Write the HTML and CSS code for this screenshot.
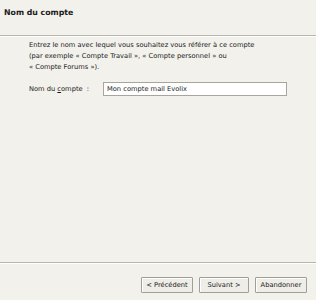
FILE: index.html
```html
<!DOCTYPE html>
<html>
<head>
<meta charset="utf-8">
<link rel="stylesheet" href="styles.css">
</head>
<body>
<div class="wizard">
  <div class="header">
    <div class="title">Nom du compte</div>
  </div>
  <div class="content">
    <p class="desc">Entrez le nom avec lequel vous souhaitez vous référer à ce compte<br>(par exemple « Compte Travail », « Compte personnel » ou<br>« Compte Forums »).</p>
    <div class="field">
      <span class="label">Nom du <u>c</u>ompte&nbsp; :</span>
      <div class="input">Mon compte mail Evolix</div>
    </div>
  </div>
  <div class="footer">
    <button class="btn">&lt; Précédent</button>
    <button class="btn btn-next">Suivant &gt;</button>
    <button class="btn">Abandonner</button>
  </div>
</div>
</body>
</html>
```
FILE: styles.css
```css
html, body {
  margin: 0;
  padding: 0;
  width: 316px;
  height: 300px;
  overflow: hidden;
  background: #f2f1ec;
}
.wizard {
  display: flex;
  flex-direction: column;
  height: 300px;
  font-family: "DejaVu Sans", sans-serif;
  font-size: 6.7px;
  color: #1a1a1a;
}
.header {
  height: 36px;
  flex: none;
  border-bottom: 1px solid #b9b6ae;
  box-shadow: 0 1px 0 #ffffff;
  box-sizing: border-box;
  padding: 8px 0 0 4px;
}
.title {
  font-weight: bold;
  font-size: 7.8px;
}
.content {
  flex: 1;
  padding: 4px 0 0 29px;
  border-bottom: 1px solid #b9b6ae;
}
.desc {
  margin: 0;
  line-height: 11px;
}
.field {
  display: flex;
  align-items: center;
  margin-top: 9px;
}
.label {
  width: 74px;
  color: #1a1a1a;
}
.input {
  width: 176px;
  height: 12px;
  line-height: 12px;
  border: 1px solid #a8a59e;
  background: #fff;
  padding: 0 3px;
  color: #1a1a1a;
}
.footer {
  height: 37px;
  flex: none;
  box-sizing: border-box;
  border-top: 1px solid #fff;
  display: flex;
  justify-content: flex-end;
  align-items: flex-start;
  gap: 6px;
  padding: 13px 9px 0 0;
}
.btn {
  font-family: "DejaVu Sans", sans-serif;
  font-size: 6.7px;
  color: #1a1a1a;
  height: 16px;
  min-width: 52px;
  padding: 0 3px;
  background: #efede7;
  border: 1px solid #a19e97;
  border-radius: 1px;
  box-shadow: inset 1px 1px 0 #fff;
}
.btn-next {
  min-width: 50px;
}
```
